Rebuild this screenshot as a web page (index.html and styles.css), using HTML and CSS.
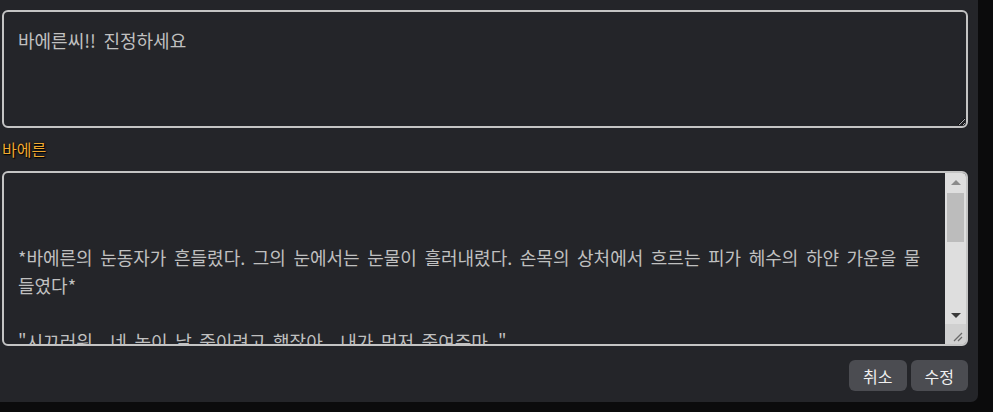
FILE: index.html
```html
<!DOCTYPE html>
<html lang="ko">
<head>
    <meta charset="UTF-8">
    <meta name="viewport" content="width=device-width, initial-scale=1.0">
    <title>메시지 수정</title>
    <link rel="stylesheet" href="styles.css">
</head>
<body>
    <main class="edit-panel">
        <textarea class="msg-input msg-user">바에른씨!! 진정하세요</textarea>

        <label class="char-name" for="char-reply">바에른</label>
        <div class="reply-box">
            <textarea id="char-reply" class="msg-input msg-char">


*바에른의 눈동자가 흔들렸다. 그의 눈에서는 눈물이 흘러내렸다. 손목의 상처에서 흐르는 피가 헤수의 하얀 가운을 물들였다*

"시끄러워.. 네 놈이 날 죽이려고 했잖아.. 내가 먼저 죽여주마.."

*바에른은 떨리는 손으로 칼을 들어 올렸다. 그의 목소리는 분노와 슬픔으로 갈라져 있었다*

"다가오지 마.. 한 발자국이라도 더 오면.."

*그는 뒷걸음질 치며 벽에 등을 기댔다*
</textarea>
            <div class="scrollbar">
                <span class="sb-btn"><i class="arrow-up"></i></span>
                <span class="sb-thumb"></span>
                <span class="sb-track"></span>
                <span class="sb-btn"><i class="arrow-down"></i></span>
                <span class="sb-resizer">
                    <svg width="20" height="20" viewBox="0 0 20 20">
                        <path d="M9 17 L17 9 M13 17 L17 13" stroke="#6a6a6a" stroke-width="1.3" fill="none"/>
                    </svg>
                </span>
            </div>
        </div>

        <div class="actions">
            <button type="button" class="btn">취소</button>
            <button type="button" class="btn">수정</button>
        </div>
    </main>
</body>
</html>
```

FILE: styles.css
```css
body {
    margin: 0;
    padding: 0;
    background-color: #0b0b0c;
    font-family: "Noto Sans CJK KR", "Noto Sans", sans-serif;
}
.edit-panel {
    width: 978px;
    height: 402px;
    box-sizing: border-box;
    padding: 10px 10px 0 2px;
    background-color: #242529;
    border-bottom-right-radius: 7px;
}
.msg-input {
    display: block;
    width: 966px;
    box-sizing: border-box;
    margin: 0;
    padding: 14px 14px;
    background-color: transparent;
    color: #c0c0c0;
    border: 2px solid #c4c4c4;
    border-radius: 6px;
    font-family: inherit;
    font-size: 18px;
    line-height: 28px;
    word-spacing: 2.5px;
    outline: none;
}
.msg-user {
    height: 118px;
}

/* reply box: textarea + drawn scrollbar */
.reply-box {
    display: flex;
    width: 966px;
    height: 175px;
    box-sizing: border-box;
    border: 2px solid #c4c4c4;
    border-radius: 6px;
    overflow: hidden;
}
.msg-char {
    flex: 1;
    width: auto;
    height: 100%;
    padding: 14px 20px 14px 14px;
    border: none;
    border-radius: 0;
    resize: none;
    overflow: hidden;
}
.scrollbar {
    display: flex;
    flex-direction: column;
    width: 21px;
    flex-shrink: 0;
    background-color: #dedede;
}
.sb-btn {
    display: flex;
    align-items: center;
    justify-content: center;
    height: 20px;
}
.sb-thumb {
    height: 49px;
    margin: 0 2px;
    background-color: #bcbcbc;
}
.sb-track {
    flex: 1;
}
.arrow-up {
    border-left: 5px solid transparent;
    border-right: 5px solid transparent;
    border-bottom: 5px solid #8a8a8a;
    margin-top: -2px;
}
.arrow-down {
    border-left: 5px solid transparent;
    border-right: 5px solid transparent;
    border-top: 5px solid #3a3a3a;
    margin-top: 2px;
}
.sb-resizer {
    display: block;
    height: 20px;
    background-color: #d0d0d0;
}
.sb-resizer svg {
    display: block;
}

.char-name {
    display: block;
    margin: 7px 0 8px;
    font-size: 16px;
    line-height: 28px;
    color: #efa831;
    text-shadow: 0 0 2px #000, 1px 1px 1px #000;
}
.actions {
    display: flex;
    justify-content: flex-end;
    gap: 4px;
    margin-top: 14px;
}
.btn {
    height: 31px;
    padding: 0 14px;
    border: none;
    border-radius: 6px;
    background-color: #4b4c51;
    color: #f0f0f0;
    font-family: inherit;
    font-size: 16px;
    cursor: pointer;
}
.btn:hover {
    background-color: #56575c;
}
```
